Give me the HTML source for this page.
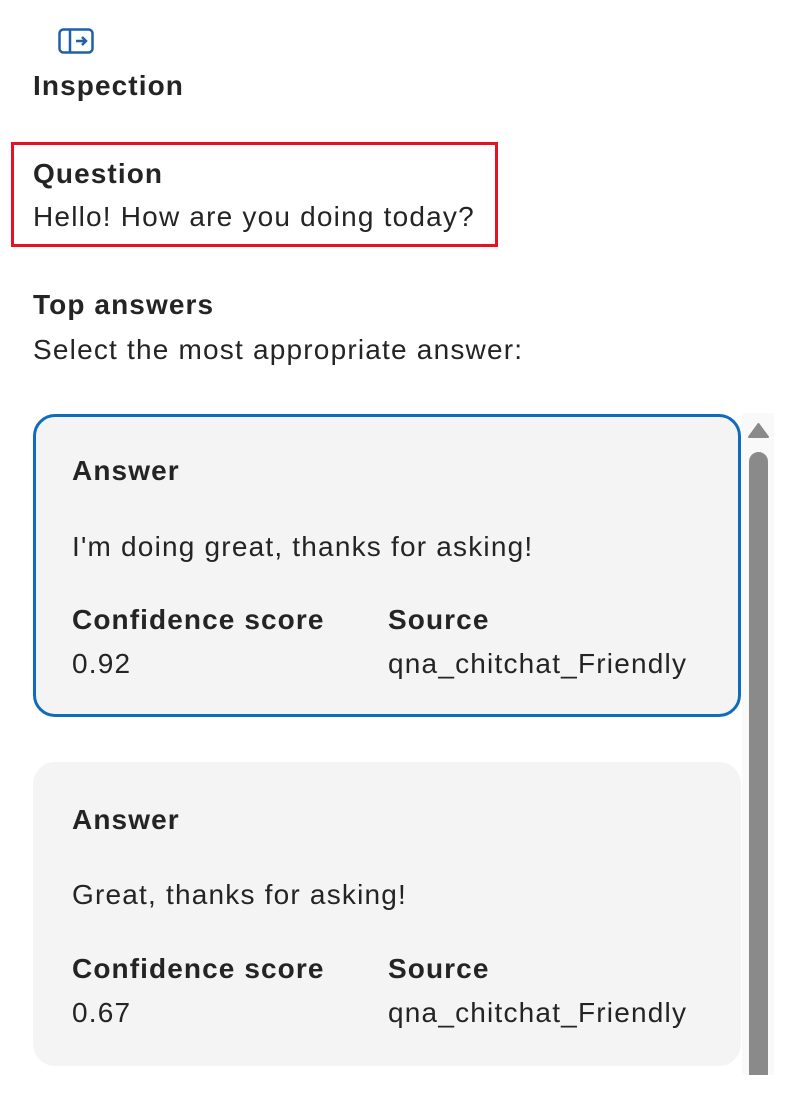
<!DOCTYPE html>
<html><head><style>
body{margin:0;width:800px;height:1107px;background:#fff;font-family:"Liberation Sans",sans-serif;color:#242424;position:relative;overflow:hidden}
.a{position:absolute;white-space:nowrap;font-size:28px;letter-spacing:1.2px}
.b{font-weight:bold;letter-spacing:1.1px}
.card{position:absolute;left:33px;width:708px;background:#f4f4f4;border-radius:22px;box-sizing:border-box}
</style></head><body>
<svg class="a" style="left:57px;top:27px" width="38" height="28" viewBox="0 0 38 28"><rect x="2.5" y="2.5" width="33" height="23" rx="4" fill="none" stroke="#1f5fa8" stroke-width="2.5"/><line x1="13" y1="3" x2="13" y2="25" stroke="#1f5fa8" stroke-width="2.5"/><path d="M19 14h10M25 10l4 4-4 4" fill="none" stroke="#1f5fa8" stroke-width="2.5"/></svg>
<div class="a b" style="left:33px;top:70px">Inspection</div>
<div class="a" style="left:11px;top:142px;width:487px;height:105px;border:3px solid #e81123;box-sizing:border-box"></div>
<div class="a b" style="left:33px;top:158px">Question</div>
<div class="a" style="left:33px;top:201px">Hello! How are you doing today?</div>
<div class="a b" style="left:33px;top:289px">Top answers</div>
<div class="a" style="left:33px;top:334px">Select the most appropriate answer:</div>
<div class="card" style="top:414px;height:303px;border:3px solid #0f6cbd"></div>
<div class="a b" style="left:72px;top:455px">Answer</div>
<div class="a" style="left:72px;top:531px">I'm doing great, thanks for asking!</div>
<div class="a b" style="left:72px;top:604px">Confidence score</div>
<div class="a" style="left:72px;top:648px">0.92</div>
<div class="a b" style="left:388px;top:604px">Source</div>
<div class="a" style="left:388px;top:648px">qna_chitchat_Friendly</div>
<div class="card" style="top:762px;height:304px"></div>
<div class="a b" style="left:72px;top:804px">Answer</div>
<div class="a" style="left:72px;top:879px">Great, thanks for asking!</div>
<div class="a b" style="left:72px;top:953px">Confidence score</div>
<div class="a" style="left:72px;top:997px">0.67</div>
<div class="a b" style="left:388px;top:953px">Source</div>
<div class="a" style="left:388px;top:997px">qna_chitchat_Friendly</div>
<div class="a" style="left:742px;top:413px;width:32px;height:662px;background:#f9f9f9"></div>
<svg class="a" style="left:748px;top:423px" width="21" height="15"><path d="M10.5 1L20 14H1z" fill="#8a8a8a" stroke="#8a8a8a" stroke-linejoin="round" stroke-width="2"/></svg>
<div class="a" style="left:749px;top:452px;width:19px;height:623px;background:#8a8a8a;border-radius:10px 10px 0 0"></div>
</body></html>
